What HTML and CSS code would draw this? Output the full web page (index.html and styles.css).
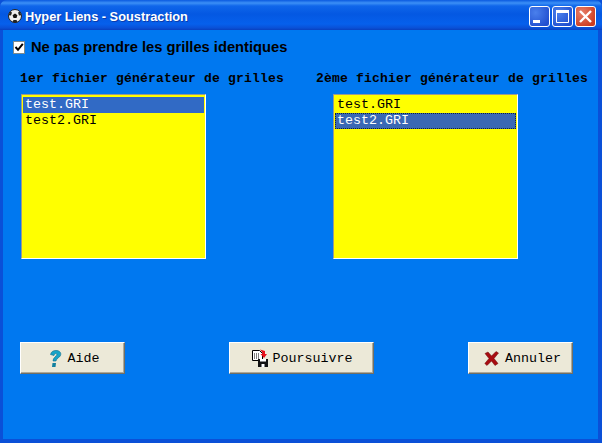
FILE: index.html
```html
<!DOCTYPE html>
<html lang="fr">
<head>
<meta charset="utf-8">
<title>Hyper Liens - Soustraction</title>
<link rel="stylesheet" href="styles.css">
</head>
<body>
<div class="window">
  <header class="titlebar">
    <svg class="app-icon" width="16" height="16" viewBox="0 0 16 16">
      <circle cx="8" cy="8" r="6.5" fill="#eee" stroke="#222" stroke-width="1"/>
      <path d="M8 5.500l2.400 1.700-.9 2.800H6.500l-.9-2.800z" fill="#111"/>
      <path d="M3 3.500l2 1-1 3-2.300-.3zM13 3.500l-2 1 1 3 2.300-.3zM5.500 14l1-2h3l1 2-2.500 1z" fill="#222"/>
    </svg>
    <span class="title-text">Hyper Liens - Soustraction</span>
    <div class="caption-buttons">
      <div class="cap cap-blue">
        <svg width="21" height="21" viewBox="0 0 21 21"><rect x="4" y="14" width="7" height="3" fill="#fff"/></svg>
      </div>
      <div class="cap cap-blue">
        <svg width="21" height="21" viewBox="0 0 21 21"><path d="M4.500 4.500h12v12h-12z" fill="none" stroke="#fff"/><rect x="4" y="4" width="13" height="3" fill="#fff"/></svg>
      </div>
      <div class="cap cap-red">
        <svg width="21" height="21" viewBox="0 0 21 21"><path d="M5 5l11 11M16 5L5 16" stroke="#fff" stroke-width="2.400"/></svg>
      </div>
    </div>
  </header>
  <main class="client">
    <label class="check-row">
      <span class="checkbox">
        <svg width="10" height="10" viewBox="0 0 10 10"><path d="M1.500 5l2.500 2.800L8.800 1.800" fill="none" stroke="#000" stroke-width="2"/></svg>
      </span>
      <span class="check-label">Ne pas prendre les grilles identiques</span>
    </label>
    <div class="lists">
      <section class="col col-left">
        <h2 class="col-title">1er fichier générateur de grilles</h2>
        <ul class="listbox">
          <li class="item item-selected">test.GRI</li>
          <li class="item">test2.GRI</li>
        </ul>
      </section>
      <section class="col col-right">
        <h2 class="col-title">2ème fichier générateur de grilles</h2>
        <ul class="listbox">
          <li class="item">test.GRI</li>
          <li class="item item-focused">test2.GRI</li>
        </ul>
      </section>
    </div>
    <div class="actions">
      <button class="btn btn-help" type="button">
        <svg width="18" height="19" viewBox="0 0 18 19">
          <path d="M4.500 5.500C5 2.500 8 1 11 1.500c3 .5 4.500 2.500 3.500 5C13.800 8.500 10.500 9 10 12H7c0-3.500 3.500-4.500 3.800-6.300C11 4 8.500 4 8 6.500z" fill="#18a4c8" stroke="#0b6a8a" stroke-width=".6"/>
          <path d="M6.500 14h3.500l-.5 4H6z" fill="#12809f"/>
        </svg>
        <span>Aide</span>
      </button>
      <button class="btn btn-next" type="button">
        <svg width="18" height="18" viewBox="0 0 18 18">
          <path d="M1.500 1.500h7l3 3v7h-10z" fill="#fff" stroke="#000"/>
          <path d="M3 5h5M3 7h6M3 9h6" stroke="#000" stroke-dasharray="1 1"/>
          <rect x="7" y="10" width="10" height="8" fill="#111"/>
          <rect x="9" y="10" width="6" height="2.500" fill="#fff"/>
          <rect x="10.500" y="15" width="3" height="3" fill="#fff"/>
          <path d="M9 0.500l5 1.500 0 3 2 0-3 4-3.500-4 2 0-.5-2z" fill="#e8101a"/>
        </svg>
        <span>Poursuivre</span>
      </button>
      <button class="btn btn-cancel" type="button">
        <svg width="15" height="15" viewBox="0 0 15 15">
          <path d="M1 2.500L4 1l3.500 4L12 .5l2.500 1.500L10 7.500l4 5-3 2-3.500-4.500L3 14.500.8 12.500 5 7.500z" fill="#a80c10" stroke="#6a0808" stroke-width=".5"/>
        </svg>
        <span>Annuler</span>
      </button>
    </div>
  </main>
</div>
</body>
</html>
```
FILE: styles.css
```css
* {
  box-sizing: border-box;
}

html,
body {
  margin: 0;
  padding: 0;
  overflow: hidden;
}

.window {
  width: 602px;
  height: 443px;
  display: flex;
  flex-direction: column;
  background: #0a50d8;
}

.titlebar {
  height: 30px;
  flex: none;
  display: flex;
  align-items: center;
  padding: 3px 6px 1px 7px;
  border-radius: 7px 7px 0 0;
  background: linear-gradient(180deg, #0a5ae0 0, #3c90f6 3px, #0f66ea 6px, #0458e2 14px, #0660ec 24px, #0a50d6 28px, #0840c0 30px);
}

.app-icon {
  margin-right: 2px;
  flex: none;
}

.title-text {
  flex: 1;
  font: bold 12.800px "Liberation Sans", sans-serif;
  color: #fff;
  text-shadow: 1px 1px 0 #0a3cac;
}

.caption-buttons {
  display: flex;
  gap: 2px;
}

.cap {
  width: 21px;
  height: 21px;
  border: 1px solid #fff;
  border-radius: 3px;
  overflow: hidden;
  display: flex;
  align-items: center;
  justify-content: center;
}

.cap svg {
  flex: none;
}

.cap-blue {
  background: radial-gradient(circle at 30% 30%, #4a80ec, #2250d0 80%);
}

.cap-red {
  background: radial-gradient(circle at 30% 30%, #e8806a, #cc3c20 80%);
}

.client {
  flex: 1;
  margin: 0 4px 4px 3px;
  background: #0078f0;
  display: flex;
  flex-direction: column;
  min-height: 0;
}

.check-row {
  display: flex;
  align-items: center;
  gap: 6px;
  margin: 10px 0 0 10px;
  height: 14px;
}

.checkbox {
  width: 12px;
  height: 13px;
  background: #fff;
  border: 1px solid #7a8a90;
  display: flex;
  align-items: center;
  justify-content: center;
}

.check-label {
  font: bold 14.700px "Liberation Sans", sans-serif;
  color: #000;
  white-space: nowrap;
}

.lists {
  display: flex;
  margin-top: 17px;
  height: 188px;
}

.col {
  display: flex;
  flex-direction: column;
  width: 296px;
  padding-left: 17px;
}

.col-title {
  margin: 0;
  font: bold 13px/16px "Liberation Mono", monospace;
  letter-spacing: 0.200px;
  color: #000;
  white-space: nowrap;
}

.col-left .listbox {
  margin-left: 1px;
}

.col-right .listbox {
  margin-left: 17px;
}

.listbox {
  list-style: none;
  margin: 7px 0 0;
  padding: 2px 1px 1px;
  width: 185px;
  height: 166px;
  background: #ffff00;
  border: 1px solid #fff;
  border-top-color: #9a9a8e;
  border-left-color: #9a9a8e;
}

.item {
  height: 16px;
  padding-left: 2px;
  font: 13.330px/16px "Liberation Mono", monospace;
  color: #000;
  white-space: nowrap;
}

.item-selected {
  background: #316ac5;
  color: #fff;
}

.item-focused {
  background: #3a68b4;
  color: #fff;
  outline: 1px dotted #10243c;
  outline-offset: -1px;
}

.actions {
  display: flex;
  margin-top: 83px;
  padding-left: 17px;
}

.btn {
  height: 32px;
  display: flex;
  align-items: center;
  justify-content: center;
  gap: 4px;
  padding: 0;
  background: #ece9d8;
  border: 1px solid;
  border-color: #fff #716f64 #716f64 #fff;
  box-shadow: inset -1px -1px 0 #aca899;
  font: 13.330px "Liberation Mono", monospace;
  color: #000;
}

.btn-help {
  width: 105px;
}

.btn-next {
  width: 145px;
  margin-left: 104px;
}

.btn-cancel {
  width: 105px;
  margin-left: 94px;
  padding-left: 4px;
  gap: 6px;
}
```
